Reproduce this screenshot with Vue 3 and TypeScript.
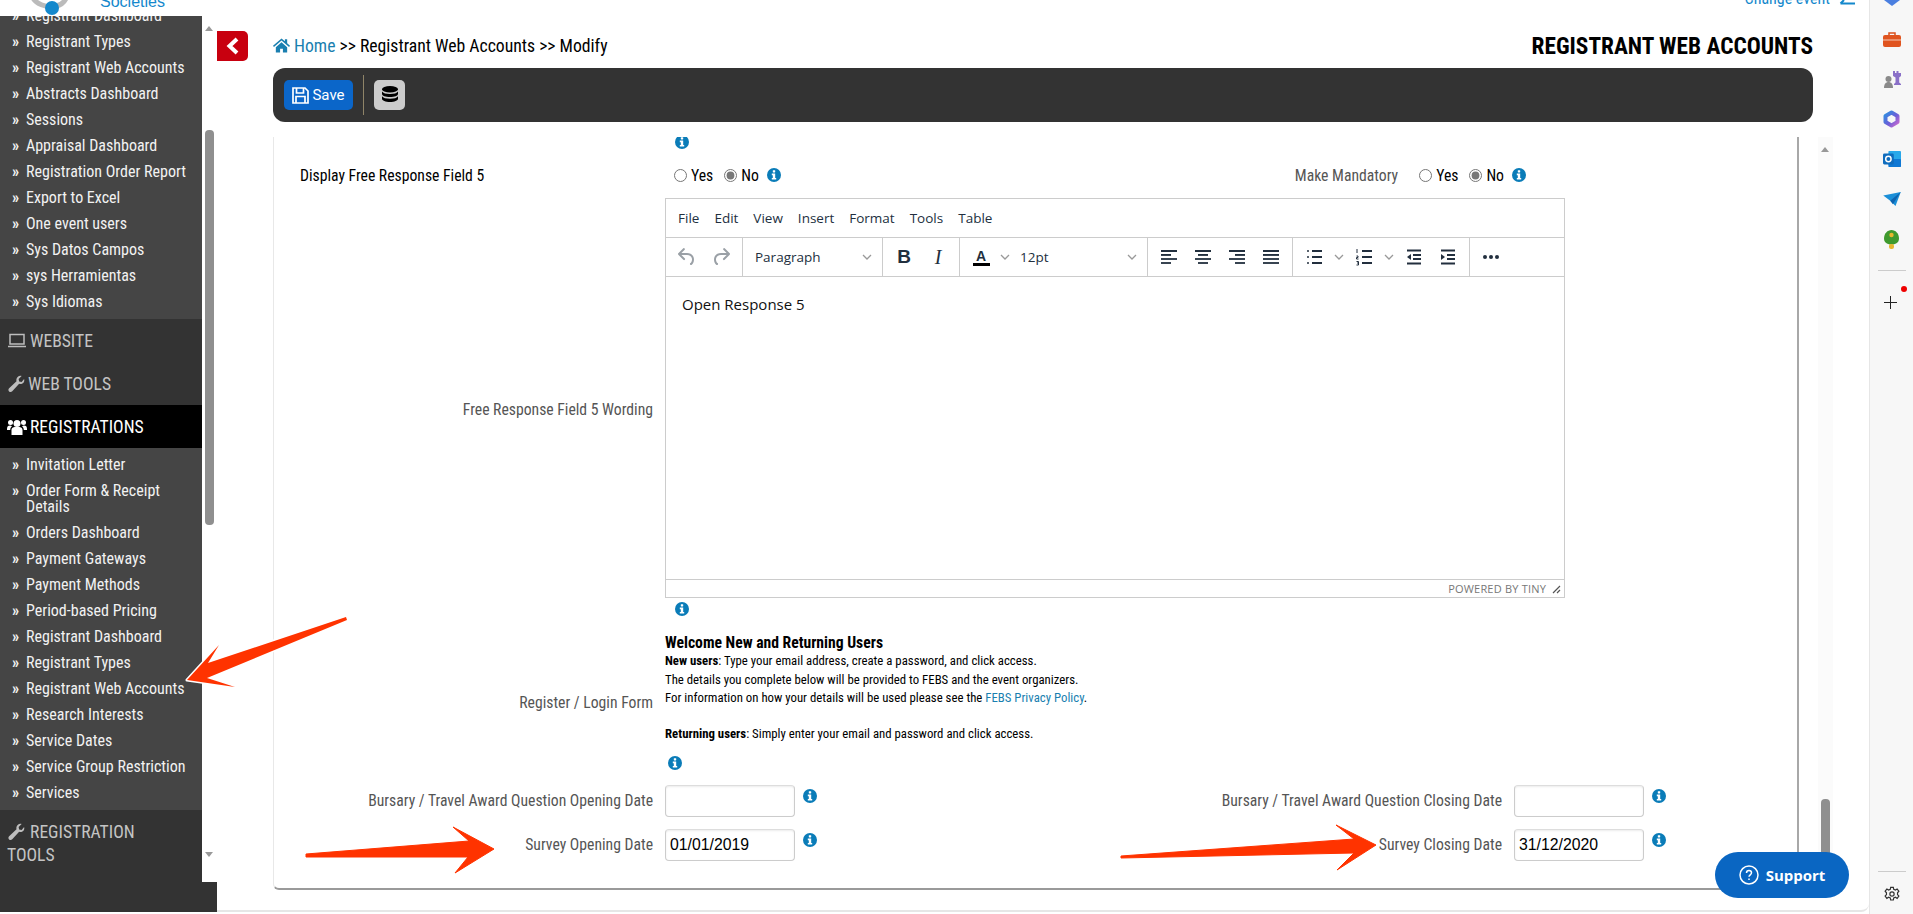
<script setup lang="ts">
const topItems = ['Registrant Dashboard', 'Registrant Types', 'Registrant Web Accounts', 'Abstracts Dashboard', 'Sessions', 'Appraisal Dashboard', 'Registration Order Report', 'Export to Excel', 'One event users', 'Sys Datos Campos', 'sys Herramientas', 'Sys Idiomas']
const regItems = ['Invitation Letter', 'Order Form & Receipt Details', 'Orders Dashboard', 'Payment Gateways', 'Payment Methods', 'Period-based Pricing', 'Registrant Dashboard', 'Registrant Types', 'Registrant Web Accounts', 'Research Interests', 'Service Dates', 'Service Group Restriction', 'Services']
const menus = ['File', 'Edit', 'View', 'Insert', 'Format', 'Tools', 'Table']
const undoPath = 'M6.4 8H12c3.7 0 6.2 2 6.8 5.1.6 2.7-.4 5.6-2.3 6.8a1 1 0 0 1-1-1.8c1.1-.7 1.8-2.7 1.4-4.6-.5-2.1-2.1-3.5-4.9-3.5H6.4l3.3 3.3a1 1 0 1 1-1.4 1.4l-5-5a1 1 0 0 1 0-1.4l5-5a1 1 0 0 1 1.4 1.4L6.4 8z'
// x1,x2 of each of the four bars of the alignment icons
const aligns: number[][][] = [
  [[4, 20], [4, 14], [4, 20], [4, 14]],
  [[4, 20], [7, 17], [4, 20], [7, 17]],
  [[4, 20], [10, 20], [4, 20], [10, 20]],
  [[4, 20], [4, 20], [4, 20], [4, 20]],
]
</script>

<template>
  <svg class="defs" width="0" height="0" aria-hidden="true">
    <defs>
      <linearGradient id="copilot" x1="0" y1="0" x2="1" y2="1">
        <stop offset="0" stop-color="#2f8fe0" />
        <stop offset=".55" stop-color="#6a5fd8" />
        <stop offset="1" stop-color="#c86ad0" />
      </linearGradient>
    </defs>
    <symbol id="info" viewBox="0 0 14 14">
      <circle cx="7" cy="7" r="7" fill="#0a7cb8" />
      <rect x="5.8" y="2.2" width="2.4" height="2.2" rx=".4" fill="#fff" />
      <path d="M4.8 5.6h3.4v4.3h1v1.7H4.8V9.9h1V7.3h-1z" fill="#fff" />
    </symbol>
    <symbol id="wrench" viewBox="0 0 24 24">
      <path d="M22.8 5.2c.5 1.600.3 3.600-.9 5-1.500 1.700-3.700 2.200-5.700 1.500L7 21.800c-1.200 1.300-3 1.300-4.200.2-1.200-1.200-1.200-3.100 0-4.300l9.900-9.400c-.6-2-.1-4.200 1.500-5.700C15.700 1.200 17.800.8 19.500 1.400l-4 3.800.7 3.300 3.300.8z" fill="#bdbdbd" />
    </symbol>
    <symbol id="chev" viewBox="0 0 10 6">
      <path d="M1 1l4 4 4-4" fill="none" stroke="#999" stroke-width="1.300" />
    </symbol>
  </svg>

  <div class="page">
    <div class="side-col">
      <div class="logo-strip">
        <svg class="logo" width="70" height="16" viewBox="0 0 70 16">
          <path d="M2 -4c3 8 14 12 24 10 6-1 9-4 11-10" fill="none" stroke="#bbb" stroke-width="5" />
          <circle cx="22" cy="8" r="7" fill="#1488cc" />
        </svg>
        <span class="societies">Societies</span>
      </div>
      <div class="side-body">
        <nav class="nav">
          <ul class="items first">
            <li v-for="item in topItems" :key="item"><i>»</i><span>{{ item }}</span></li>
          </ul>
          <div class="group">
            <svg width="20" height="16" viewBox="0 0 20 16"><path d="M3 1.500h14v9.500H3zM1 13.500h18" fill="none" stroke="#bdbdbd" stroke-width="1.500" /></svg>
            WEBSITE
          </div>
          <div class="group">
            <svg width="18" height="18"><use href="#wrench" /></svg>
            WEB TOOLS
          </div>
          <div class="group active">
            <svg width="20" height="18" viewBox="0 0 20 18" fill="#fff">
              <circle cx="10" cy="5.500" r="3.500" /><circle cx="3.500" cy="4.500" r="2.500" /><circle cx="16.500" cy="4.500" r="2.500" />
              <path d="M4.500 17V12c0-2.500 2-3 5.500-3s5.500.5 5.500 3v5zM0 11c0-2.500 1-3.500 3-3.500.8 0 1.300.3 2 .8-1 .8-1.800 2-1.800 3.700H0zM20 11c0-2.500-1-3.500-3-3.500-.8 0-1.300.3-2 .8 1 .8 1.800 2 1.800 3.700H20z" />
            </svg>
            REGISTRATIONS
          </div>
          <ul class="items">
            <li v-for="item in regItems" :key="item"><i>»</i><span>{{ item }}</span></li>
          </ul>
          <div class="group wrap">
            <svg width="18" height="18"><use href="#wrench" /></svg>
            REGISTRATION TOOLS
          </div>
        </nav>
        <div class="side-scroll">
          <b class="tri up"></b>
          <div class="thumb"></div>
          <b class="tri down"></b>
        </div>
      </div>
      <div class="side-foot"></div>
    </div>

    <div class="main">
      <div class="topbar">
        <a>Change event</a>
        <svg width="16" height="6" viewBox="0 0 16 6"><path d="M16 3.500H1.500M5 0L1.500 3.500" fill="none" stroke="#1488cc" stroke-width="2" /></svg>
      </div>
      <div class="main-row">
        <div class="back-col">
          <button class="back" type="button">
            <svg width="14" height="18" viewBox="0 0 14 18"><path d="M11 2L3.500 9l7.500 7" fill="none" stroke="#fff" stroke-width="4" /></svg>
          </button>
        </div>

        <div class="content">
          <div class="head">
            <div class="crumb">
              <svg width="17" height="15" viewBox="0 0 18 15" fill="#1a7fb0"><path d="M9 0L0 7.800l1 1.200L9 2.200 17 9l1-1.200-3-2.600V1h-2.400v2.100zM3 9.300V15h4.500v-4h3v4H15V9.300L9 4.100z" /></svg>
              <a>Home</a> &gt;&gt; Registrant Web Accounts &gt;&gt; Modify
            </div>
            <h1>REGISTRANT WEB ACCOUNTS</h1>
          </div>

          <div class="toolbar">
            <button class="save" type="button">
              <svg width="17" height="17" viewBox="0 0 17 17"><path d="M1 1h12l3 3v12H1zM4.500 1v5h7V1M4 16v-6.500h9V16" fill="none" stroke="#fff" stroke-width="1.700" /></svg>
              Save
            </button>
            <span class="tb-sep"></span>
            <button class="db" type="button">
              <svg width="16" height="18" viewBox="0 0 16 18" fill="#000">
                <ellipse cx="8" cy="3.200" rx="8" ry="3.200" />
                <path d="M0 5.600c1 1.700 4 2.500 8 2.500s7-.8 8-2.500v2.300c0 1.700-3.600 3-8 3s-8-1.300-8-3zM0 10.200c1 1.700 4 2.500 8 2.500s7-.8 8-2.500v2.600c0 1.800-3.600 3.200-8 3.200s-8-1.400-8-3.200z" />
              </svg>
            </button>
          </div>

          <div class="panel">
            <svg class="info first-info" width="14" height="14"><use href="#info" /></svg>

            <div class="row row-display">
              <div class="lbl-display">Display Free Response Field 5</div>
              <label class="radio"><input type="radio" name="f5" />Yes</label>
              <label class="radio"><input type="radio" name="f5" checked />No</label>
              <svg class="info" width="14" height="14"><use href="#info" /></svg>
              <div class="mandatory">
                <span class="lbl">Make Mandatory</span>
                <label class="radio"><input type="radio" name="m5" />Yes</label>
                <label class="radio"><input type="radio" name="m5" checked />No</label>
                <svg class="info" width="14" height="14"><use href="#info" /></svg>
              </div>
            </div>

            <div class="row row-editor">
              <div class="lbl lbl-col">Free Response Field 5 Wording</div>
              <div class="field">
                <div class="editor">
                  <div class="menubar">
                    <span v-for="m in menus" :key="m">{{ m }}</span>
                  </div>
                  <div class="ed-tools">
                    <div class="ed-group">
                      <span class="ed-btn"><svg width="24" height="24" viewBox="0 0 24 24"><path :d="undoPath" fill="#9aa0a6" /></svg></span>
                      <span class="ed-btn"><svg class="flip" width="24" height="24" viewBox="0 0 24 24"><path :d="undoPath" fill="#9aa0a6" /></svg></span>
                    </div>
                    <div class="ed-group">
                      <span class="ed-select para">Paragraph<svg width="10" height="6"><use href="#chev" /></svg></span>
                    </div>
                    <div class="ed-group">
                      <span class="ed-btn glyph-b">B</span>
                      <span class="ed-btn glyph-i">I</span>
                    </div>
                    <div class="ed-group">
                      <span class="ed-btn color"><span class="glyph-a">A</span></span>
                      <span class="ed-chev tight"><svg width="10" height="6"><use href="#chev" /></svg></span>
                      <span class="ed-select size">12pt<svg width="10" height="6"><use href="#chev" /></svg></span>
                    </div>
                    <div class="ed-group">
                      <span v-for="(bars, i) in aligns" :key="i" class="ed-btn">
                        <svg width="24" height="24" viewBox="0 0 24 24" stroke="#222f3e" stroke-width="1.800">
                          <path v-for="(b, j) in bars" :key="j" :d="`M${b[0]} ${6 + j * 4}H${b[1]}`" />
                        </svg>
                      </span>
                    </div>
                    <div class="ed-group">
                      <span class="ed-btn">
                        <svg width="24" height="24" viewBox="0 0 24 24" stroke="#222f3e" stroke-width="1.800" fill="#222f3e">
                          <path d="M10 6h10M10 12h10M10 18h10" /><circle cx="6" cy="6" r="1" stroke="none" /><circle cx="6" cy="12" r="1" stroke="none" /><circle cx="6" cy="18" r="1" stroke="none" />
                        </svg>
                      </span>
                      <span class="ed-chev"><svg width="10" height="6"><use href="#chev" /></svg></span>
                      <span class="ed-btn">
                        <svg width="24" height="24" viewBox="0 0 24 24" stroke="#222f3e" stroke-width="1.800" fill="none">
                          <path d="M10 6h10M10 12h10M10 18h10" /><path stroke-width="1" d="M5 4v4M4.500 11h1.500v1.500H4.500V14H6.500M4.500 16.500H6.500V20H4.500M5 18H6.500" />
                        </svg>
                      </span>
                      <span class="ed-chev"><svg width="10" height="6"><use href="#chev" /></svg></span>
                      <span class="ed-btn">
                        <svg width="24" height="24" viewBox="0 0 24 24" stroke="#222f3e" stroke-width="1.800" fill="#222f3e">
                          <path d="M5 5.500h14M11 10h8M11 14h8M5 18.500h14" /><path stroke="none" d="M9 9v6l-4-3z" />
                        </svg>
                      </span>
                      <span class="ed-btn">
                        <svg width="24" height="24" viewBox="0 0 24 24" stroke="#222f3e" stroke-width="1.800" fill="#222f3e">
                          <path d="M5 5.500h14M11 10h8M11 14h8M5 18.500h14" /><path stroke="none" d="M5 9v6l4-3z" />
                        </svg>
                      </span>
                    </div>
                    <div class="ed-group last">
                      <span class="ed-btn">
                        <svg width="24" height="24" viewBox="0 0 24 24" fill="#222f3e"><circle cx="6" cy="12" r="2" /><circle cx="12" cy="12" r="2" /><circle cx="18" cy="12" r="2" /></svg>
                      </span>
                    </div>
                  </div>
                  <div class="ed-body">Open Response 5</div>
                  <div class="ed-status">
                    POWERED BY TINY
                    <svg width="10" height="10" viewBox="0 0 10 10"><path d="M9 2L2 9M9 6L6 9" fill="none" stroke="#555" stroke-width="1.200" /></svg>
                  </div>
                </div>
                <svg class="info after-editor" width="14" height="14"><use href="#info" /></svg>
              </div>
            </div>

            <div class="row row-login">
              <div class="lbl lbl-col">Register / Login Form</div>
              <div class="field">
                <div class="welcome">
                  <h4>Welcome New and Returning Users</h4>
                  <p><strong>New users</strong>: Type your email address, create a password, and click access.</p>
                  <p>The details you complete below will be provided to FEBS and the event organizers.</p>
                  <p>For information on how your details will be used please see the <a>FEBS Privacy Policy</a>.</p>
                  <p>&nbsp;</p>
                  <p><strong>Returning users</strong>: Simply enter your email and password and click access.</p>
                </div>
                <svg class="info after-login" width="14" height="14"><use href="#info" /></svg>
              </div>
            </div>

            <div class="dates">
              <div class="lbl">Bursary / Travel Award Question Opening Date</div>
              <input class="date" type="text" />
              <div class="date-mid">
                <svg class="info" width="14" height="14"><use href="#info" /></svg>
                <span class="lbl">Bursary / Travel Award Question Closing Date</span>
              </div>
              <input class="date" type="text" />
              <svg class="info date-info" width="14" height="14"><use href="#info" /></svg>

              <div class="lbl">Survey Opening Date</div>
              <input class="date" type="text" value="01/01/2019" />
              <div class="date-mid">
                <svg class="info" width="14" height="14"><use href="#info" /></svg>
                <span class="lbl">Survey Closing Date</span>
              </div>
              <input class="date" type="text" value="31/12/2020" />
              <svg class="info date-info" width="14" height="14"><use href="#info" /></svg>
            </div>
          </div>
        </div>

        <div class="panel-scroll">
          <b class="tri up"></b>
          <div class="thumb"></div>
        </div>
      </div>
    </div>

    <aside class="rail">
      <svg class="r-top" width="20" height="6" viewBox="0 0 20 6"><path d="M2 0h16l-8 6z" fill="#4a7fe0" /></svg>
      <div class="slot">
        <svg width="18" height="15" viewBox="0 0 18 15"><path d="M6 3V1h6v2" fill="none" stroke="#d9501e" stroke-width="1.500" /><rect y="3" width="18" height="12" rx="2" fill="#e0541f" /><rect y="7.500" width="18" height="1" fill="#f6c9b5" /></svg>
      </div>
      <div class="slot">
        <svg width="18" height="18" viewBox="0 0 18 18"><circle cx="5.500" cy="9" r="3" fill="#8a8a8a" /><path d="M1 18c0-4 1.800-6 4.500-6s4.500 2 4.500 6z" fill="#8a8a8a" /><path d="M10 1h2v2h1.500V1h2v2H18v3l-1.800 1.500v5L18 14v1h-7v-1l1.500-1.500v-5L10 6z" fill="#8a70c8" /></svg>
      </div>
      <div class="slot">
        <svg width="17" height="18" viewBox="0 0 17 18"><path d="M8.500 2.500l6 3.500v6l-6 3.500-6-3.500V6z" fill="none" stroke="url(#copilot)" stroke-width="4" stroke-linejoin="round" /></svg>
      </div>
      <div class="slot">
        <svg width="18" height="18" viewBox="0 0 20 20"><rect x="6" y="1" width="14" height="16" rx="1" fill="#28a8ea" /><rect x="6" y="10" width="14" height="9" rx="1" fill="#0f78d4" /><rect y="4" width="12" height="12" rx="1.500" fill="#0f6cbd" /><circle cx="6" cy="10" r="3" fill="none" stroke="#fff" stroke-width="1.600" /></svg>
      </div>
      <div class="slot">
        <svg width="18" height="14" viewBox="0 0 20 16"><path d="M0 4L20 0 14 16 8 10z" fill="#1a8fd8" /><path d="M8 10l12-10-9 14z" fill="#0d63b0" /></svg>
      </div>
      <div class="slot">
        <svg width="15" height="19" viewBox="0 0 15 19"><path d="M7.500 0C11.500 0 15 3.500 15 8.500c0 3.500-2.500 6-7.500 6S0 12 0 8.500C0 3.500 3.500 0 7.500 0z" fill="#3f9a2e" /><circle cx="7.500" cy="5" r="2.200" fill="#e8b72e" /><rect x="5" y="14" width="5" height="5" rx="2" fill="#e8b72e" /></svg>
      </div>
      <hr />
      <div class="plus">
        <svg width="13" height="13" viewBox="0 0 13 13"><path d="M6.500 0v13M0 6.500h13" stroke="#222" stroke-width="1" /></svg>
        <b></b>
      </div>
      <div class="rail-foot">
        <hr />
        <svg width="16" height="16" viewBox="0 0 24 24" fill="none" stroke="#333" stroke-width="1.800">
          <circle cx="12" cy="12" r="3.200" />
          <path d="M10 2h4l.6 3 2.500 1.100 2.600-1.600 2.600 3.400-2 2.200v2.800l2 2.200-2.600 3.400-2.600-1.600-2.500 1.100-.6 3h-4l-.6-3-2.500-1.100-2.600 1.600-2.600-3.400 2-2.200v-2.800l-2-2.200 2.600-3.400 2.600 1.600 2.500-1.100z" />
        </svg>
      </div>
    </aside>

    <!-- annotation arrows drawn over the screenshot -->
    <svg class="arrows" width="1913" height="914" viewBox="0 0 1913 914">
      <path d="M187 680L219 645 208 663 346 617 347 620 207 678 235 687z" fill="#ff3300" stroke="#fff" stroke-width="3" stroke-linejoin="round" paint-order="stroke" />
      <path d="M306 854L469 841 453 827 494 849 455 873 468 857 306 857z" fill="#ff3300" stroke="#ff3300" stroke-width="1" stroke-linejoin="round" />
      <path d="M1121 856L1354 839 1336 825 1376 845 1337 870 1354 853 1121 858z" fill="#ff3300" stroke="#ff3300" stroke-width="1" stroke-linejoin="round" />
    </svg>

    <button class="support" type="button">
      <svg width="20" height="20" viewBox="0 0 20 20" fill="none" stroke="#fff" stroke-width="1.500">
        <circle cx="10" cy="10" r="9" /><path d="M7.500 8c0-1.500 1-2.500 2.500-2.500s2.500 1 2.500 2.300c0 2-2.500 2-2.500 4" /><path d="M10 13.500v1.500" />
      </svg>
      Support
    </button>
  </div>
</template>

<style>
html, body { margin: 0; background: #fff; overflow: hidden; }
</style>

<style scoped>
* { box-sizing: border-box; }
.defs { position: absolute; }
.page {
  position: relative;
  display: flex;
  width: 1913px; height: 914px;
  overflow: hidden;
  background: #fff;
  font-family: "Roboto Condensed", "Liberation Sans Narrow", Roboto, sans-serif;
  font-stretch: condensed;
  color: #000;
}

/* sidebar */
.side-col { width: 217px; flex: none; display: flex; flex-direction: column; height: 912px; }
.logo-strip { height: 16px; flex: none; display: flex; align-items: flex-end; overflow: hidden; position: relative; }
.logo { margin-left: 30px; }
.societies { font: 16px "Liberation Sans", sans-serif; color: #1488cc; line-height: 15px; margin-bottom: 7px; }
.side-body { height: 866px; flex: none; display: flex; overflow: hidden; }
.nav { width: 202px; flex: none; background: #333; overflow: hidden; }
.items { list-style: none; margin: 0; padding: 0 0 4px; background: #454545; color: #f2f2f2; font-size: 16px; }
.items.first { margin-top: -13px; padding-bottom: 4px; }
.items:not(.first) { padding-top: 4px; }
.items li { display: flex; padding: 5px 8px 5px 12px; line-height: 16px; }
.items i { font-style: normal; width: 14px; flex: none; font-weight: 700; }
.group { height: 43px; padding: 0 7px; display: flex; align-items: center; gap: 3px; background: #333; color: #c4c4c4; font-size: 17.600px; }
.group.active { background: #000; color: #fff; }
.group.wrap { display: block; height: auto; padding: 11px 40px 0 7px; line-height: 23px; }
.group.wrap svg { vertical-align: -3px; margin-right: 1px; }
.side-scroll { width: 15px; flex: none; position: relative; background: #fff; }
.tri { position: absolute; left: 3px; width: 0; height: 0; border-left: 4.500px solid transparent; border-right: 4.500px solid transparent; }
.tri.up { border-bottom: 5px solid #999; }
.tri.down { border-top: 5px solid #999; }
.side-scroll .up { top: 10px; }
.side-scroll .down { top: 836px; }
.thumb { position: absolute; left: 3px; width: 9px; background: #8f8f8f; border-radius: 4px; }
.side-scroll .thumb { top: 114px; height: 395px; }
.side-foot { flex: 1; background: #333; }

/* main */
.main { flex: 1; min-width: 0; height: 912px; border-bottom: 2px solid #e6e6e6; display: flex; flex-direction: column; border-radius: 0 0 8px 0; }
.topbar { height: 16px; flex: none; display: flex; justify-content: flex-end; align-items: flex-start; gap: 9px; padding-right: 14px; color: #1488cc; font-size: 16px; overflow: hidden; }
.topbar a { line-height: 15px; margin-top: -9px; }
.main-row { flex: 1; display: flex; min-height: 0; }
.back-col { width: 56px; flex: none; padding-top: 15px; }
.back { width: 31px; height: 30px; border: none; padding: 0; background: #c8000f; border-radius: 0 5px 5px 0; display: flex; align-items: center; justify-content: center; }
.content { width: 1540px; flex: none; display: flex; flex-direction: column; padding-top: 15px; }
.head { height: 30px; display: flex; align-items: center; justify-content: space-between; flex: none; }
.crumb { font-size: 17.700px; }
.crumb svg { vertical-align: -1px; margin-right: 4px; }
.crumb a { color: #1a7fb0; }
h1 { margin: 0; font-size: 23.300px; font-weight: 700; }
.toolbar { margin-top: 7px; height: 54px; flex: none; border-radius: 12px; background: #333; display: flex; align-items: center; padding: 0 11px; }
.save { width: 69px; height: 30px; background: #0b66c9; color: #fff; border: none; border-radius: 5px; font: 15px Roboto, sans-serif; display: flex; align-items: center; justify-content: center; gap: 3px; padding: 0; }
.tb-sep { width: 1px; height: 40px; background: #8f8468; margin: 0 10px; }
.db { width: 31px; height: 30px; background: #ccc; border: none; border-radius: 5px; padding: 0; display: flex; align-items: center; justify-content: center; }

/* form panel */
.panel { margin-top: 15px; width: 1526px; height: 753px; flex: none; overflow: hidden; border-left: 1px solid #e8e8e8; border-right: 2px solid #a8a8a8; border-bottom: 2px solid #9a9a9a; border-radius: 0 0 6px 6px; }
.info { display: block; flex: none; }
.first-info { margin: -2px 0 0 401px; }
.row { display: flex; }
.lbl { color: #555; font-size: 15.700px; white-space: nowrap; }
.lbl-col { width: 379px; flex: none; text-align: right; align-self: center; }
.field { margin-left: 12px; flex: 1; min-width: 0; }
.row-display { margin-top: 15px; height: 22px; align-items: center; }
.lbl-display { width: 400px; flex: none; padding-left: 26px; font-size: 15.700px; }
.radio { display: flex; align-items: center; font-size: 15.700px; margin-right: 11px; }
.radio input { margin: 1px 4px 0 0; width: 13px; height: 13px; accent-color: #777; }
.row-display > .info, .mandatory > .info { margin-left: -3px; }
.mandatory { margin-left: auto; display: flex; align-items: center; padding-right: 271px; }
.mandatory .lbl { margin-right: 21px; }
.row-editor { margin-top: 12px; padding-bottom: 9px; }
.row-editor .lbl-col { padding-top: 5px; }
.editor { width: 900px; height: 400px; border: 1px solid #ccc; display: flex; flex-direction: column; font-family: "Open Sans", sans-serif; font-stretch: normal; color: #222f3e; }
.menubar { height: 39px; flex: none; display: flex; align-items: center; gap: 15px; padding-left: 12px; border-bottom: 1px solid #ccc; font-size: 13.500px; }
.ed-tools { height: 39px; flex: none; display: flex; border-bottom: 1px solid #ccc; }
.ed-group { display: flex; align-items: center; padding: 0 4px; border-right: 1px solid #ccc; font-size: 13.500px; }
.ed-group.last { border-right: none; }
.ed-btn { width: 34px; height: 34px; display: flex; align-items: center; justify-content: center; }
.flip { transform: scaleX(-1); }
.glyph-b { font: 700 19px "Liberation Sans", sans-serif; }
.glyph-i { font: italic 20px "Liberation Serif", serif; }
.glyph-a { font: 700 14px/14px "Liberation Sans", sans-serif; border-bottom: 3px solid #000; width: 17px; text-align: center; }
.ed-chev { width: 16px; display: flex; justify-content: center; }
.ed-chev.tight { width: 14px; }
.ed-select { display: flex; align-items: center; justify-content: space-between; padding: 0 6px 0 8px; }
.para { width: 131px; }
.size { width: 131px; }
.ed-body { flex: 1; padding: 12px 16px; font-size: 15px; color: #111; line-height: 30px; }
.ed-status { height: 18px; flex: none; display: flex; justify-content: flex-end; align-items: center; gap: 5px; padding-right: 3px; border-top: 1px solid #ccc; font-size: 11px; color: #777; letter-spacing: .2px; }
.after-editor { margin: 4px 0 0 10px; }
.row-login { margin-top: 9px; }
.welcome { line-height: 18.300px; font-size: 12.800px; }
.welcome h4 { margin: 0; font-size: 15.650px; font-weight: 700; line-height: 18.300px; }
.welcome p { margin: 0; }
.welcome a { color: #1a7fb0; }
.after-login { margin: 12.500px 0 0 3px; }
.dates { margin-top: 14.700px; display: grid; grid-template-columns: 379px 130px 695px 130px 1fr; column-gap: 12px; row-gap: 12px; align-items: center; }
.dates > .lbl { text-align: right; }
.date-mid { display: flex; justify-content: space-between; align-self: stretch; }
.date-mid .lbl { align-self: center; }
.date-mid .info, .date-info { align-self: start; margin-top: 4px; }
.date-mid .info { margin-left: -4px; }
.date-info { margin-left: -4px; }
.date { width: 130px; height: 32px; border: 1px solid #ccc; border-top-color: #ddd; border-radius: 4px; padding: 0 4px; font: 15.800px "Liberation Sans", sans-serif; color: #000; box-shadow: inset 0 1px 2px rgba(0,0,0,.08); outline: none; }

/* panel scrollbar */
.panel-scroll { position: relative; margin: 121px 0 0 5px; width: 15px; height: 743px; background: #fbfbfb; }
.panel-scroll .up { top: 10px; }
.panel-scroll .thumb { top: 662px; height: 60px; }

/* right rail */
.rail { width: 44px; flex: none; height: 914px; background: #f7f7f7; border-left: 1px solid #e6e6e6; display: flex; flex-direction: column; align-items: center; }
.r-top { flex: none; margin-bottom: 13px; }
.slot { height: 40px; flex: none; display: flex; align-items: center; justify-content: center; }
.rail hr { width: 28px; margin: 0; border: none; border-top: 1px solid #ccc; }
.rail > hr { margin-top: 11px; }
.plus { position: relative; height: 13px; margin-top: 25px; }
.plus svg { display: block; margin-left: -3px; }
.plus b { position: absolute; right: -10px; top: -10px; width: 6px; height: 6px; border-radius: 50%; background: #e00; }
.rail-foot { margin-top: auto; padding-bottom: 12px; display: flex; flex-direction: column; align-items: center; gap: 14px; }

.arrows { position: absolute; inset: 0; pointer-events: none; }
.support { position: absolute; left: 1715px; top: 852px; width: 134px; height: 46px; border: none; border-radius: 23px; background: #0a66c2; color: #fff; font: 700 15px "Open Sans", sans-serif; display: flex; align-items: center; justify-content: center; gap: 7px; padding: 0; }
</style>
